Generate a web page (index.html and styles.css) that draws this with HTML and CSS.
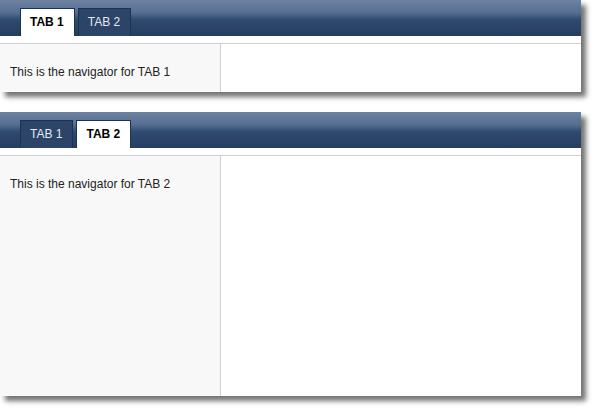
FILE: index.html
```html
<!DOCTYPE html>
<html lang="en">
	<head>
		<meta charset="UTF-8" />
		<title>Tabs</title>
		<link rel="stylesheet" href="styles.css">
	</head>
	<body>
		<div class="panel">
			<div class="tabbar">
				<div class="tab active">TAB 1</div>
				<div class="tab">TAB 2</div>
			</div>
			<div class="body short">
				<div class="nav">This is the navigator for TAB 1</div>
				<div class="content"></div>
			</div>
		</div>

		<div class="panel">
			<div class="tabbar">
				<div class="tab">TAB 1</div>
				<div class="tab active">TAB 2</div>
			</div>
			<div class="body tall">
				<div class="nav">This is the navigator for TAB 2</div>
				<div class="content"></div>
			</div>
		</div>
	</body>
</html>
```

FILE: styles.css
```css
body {
	margin: 0;
	background: #fff;
	font-family: "Liberation Sans", Arial, sans-serif;
	font-size: 12px;
	color: #222;
}

.panel {
	width: 581px;
	background: #fff;
	box-shadow: 5px 5px 5px rgba(0, 0, 0, 0.55);
	margin-bottom: 20px;
}

.tabbar {
	display: flex;
	align-items: flex-end;
	gap: 3px;
	height: 36px;
	padding-left: 20px;
	box-sizing: border-box;
	background: linear-gradient(#6d82a0, #566e92 35%, #2f4a6f 55%, #253d60);
}

.tab {
	height: 28px;
	line-height: 27px;
	padding: 0 10px 0 9px;
	box-sizing: border-box;
	border: 1px solid #1d3150;
	border-bottom: none;
	background: #2b4468;
	color: #e4e9f1;
}

.tab.active {
	padding: 0 10px 0 9px;
	background: #fff;
	color: #000;
	font-weight: bold;
}

.body {
	display: flex;
	margin-top: 7px;
	border-top: 1px solid #cfcfcf;
}

.body.short {
	height: 48px;
}

.body.tall {
	height: 240px;
}

.nav {
	width: 221px;
	padding: 21px 10px 0;
	box-sizing: border-box;
	background: #f8f8f8;
	border-right: 1px solid #d2d2d2;
}

.content {
	flex: 1;
}
```
